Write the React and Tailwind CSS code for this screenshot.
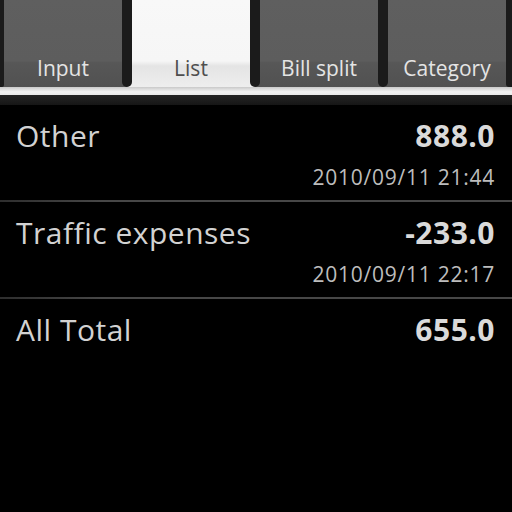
const tabs = [
  { label: "Input", active: false },
  { label: "List", active: true },
  { label: "Bill split", active: false },
  { label: "Category", active: false },
];

const entries = [
  { name: "Other", amount: "888.0", date: "2010/09/11 21:44" },
  { name: "Traffic expenses", amount: "-233.0", date: "2010/09/11 22:17" },
];

const tabBg = {
  on: "bg-[linear-gradient(to_bottom,#f8f8f8_0%,#f6f6f6_70%,#e4e4e4_76%,#eeeeee_100%)]",
  off: "bg-[linear-gradient(to_bottom,#5f5f5f_0%,#5d5d5d_70%,#575757_72%,#515151_100%)]",
};

// dark gap between two tabs, rounded at the foot so the tab colours show in the corners
const Separator = ({ left, right, className }) => (
  <div className={`relative self-stretch ${className}`}>
    <div className="absolute inset-0 flex">
      <div className={`flex-1 ${left}`} />
      <div className={`flex-1 ${right}`} />
    </div>
    <div className="relative h-full rounded-b-[5px] bg-[#1b1b1b]" />
  </div>
);

const colorOf = (t) => (t ? (t.active ? "bg-[#efefef]" : "bg-[#525252]") : "bg-[#1b1b1b]");

export default function App() {
  return (
    <div
      className="w-[512px] h-[512px] bg-black overflow-hidden"
      style={{ fontFamily: '"Open Sans", "DejaVu Sans", sans-serif' }}
    >
      {/* Tab bar */}
      <div className="flex h-[87px] bg-[#1b1b1b]">
        <Separator left={colorOf(null)} right={colorOf(tabs[0])} className="w-[4px]" />
        {tabs.map((tab, i) => (
          <div key={tab.label} className="contents">
            <div
              className={`w-[118px] flex items-end justify-center pb-[8px] ${
                tab.active ? tabBg.on : tabBg.off
              }`}
            >
              <span
                className={`text-[21px] leading-[21px] ${
                  tab.active ? "text-[#4e4e4e]" : "text-[#e4e4e4]"
                }`}
              >
                {tab.label}
              </span>
            </div>
            <Separator
              left={colorOf(tab)}
              right={colorOf(tabs[i + 1])}
              className={i === tabs.length - 1 ? "w-[6px]" : "w-[10px]"}
            />
          </div>
        ))}
      </div>
      <div className="h-[8px] bg-[linear-gradient(to_bottom,#c9c9c9,#f3f3f3_60%,#e9e9e9)]" />
      <div className="h-[10px] bg-[linear-gradient(to_bottom,#242424,#161616)]" />

      {/* Entries */}
      {entries.map((e) => (
        <div key={e.name}>
          <div className="pl-[16px] pr-[17px] pt-[16px] pb-[12px]">
            <div className="flex justify-between text-[30px] leading-[30px] tracking-[0.5px]">
              <span className="text-[#d2d2d2]">{e.name}</span>
              <span className="font-bold text-[#dadada]">{e.amount}</span>
            </div>
            <div className="mt-[16px] text-right text-[21px] leading-[21px] tracking-[0.75px] text-[#bdbdbd]">
              {e.date}
            </div>
          </div>
          <div className="h-[2px] bg-[linear-gradient(to_right,#2e2e2e,#474747_20%,#474747)]" />
        </div>
      ))}

      <div className="pl-[16px] pr-[17px] pt-[16px] flex justify-between text-[30px] leading-[30px] tracking-[0.5px]">
        <span className="text-[#d2d2d2]">All Total</span>
        <span className="font-bold text-[#dadada]">655.0</span>
      </div>
    </div>
  );
}
